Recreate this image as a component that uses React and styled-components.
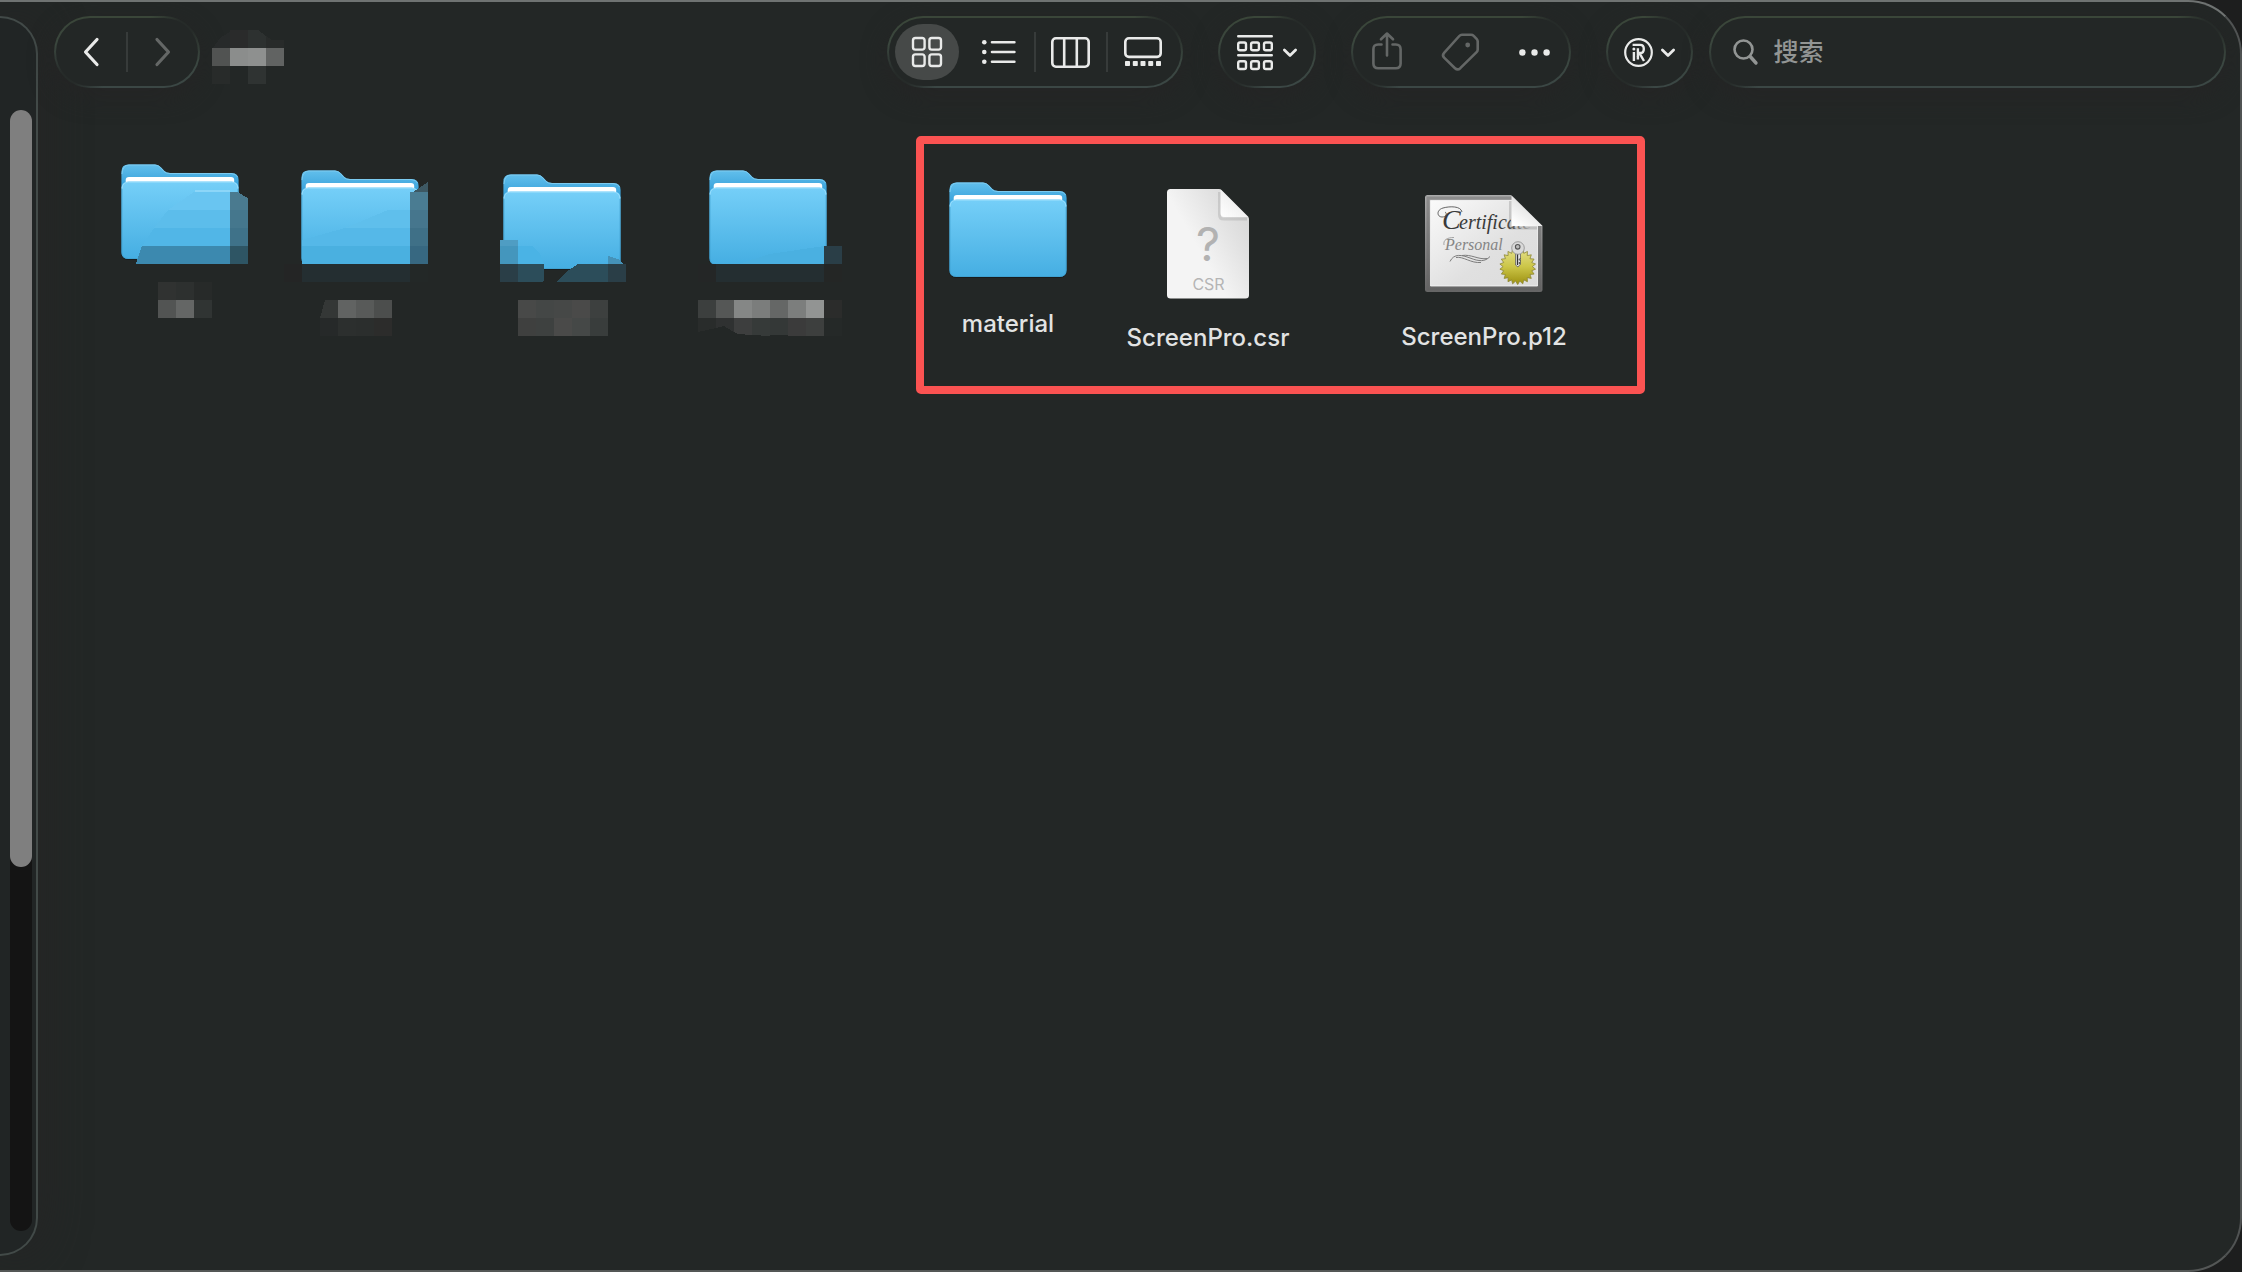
import React, {useState} from 'react';
import styled, {createGlobalStyle} from "styled-components";

const GlobalStyle = createGlobalStyle`
  * {
    box-sizing: border-box;
  }
  body {
    margin: 0;
    background-color: #1d1e1e;
    font-family: "Inter", "Noto Sans CJK SC", sans-serif;
  }
  button {
    border: none;
    padding: 0;
    margin: 0;
    background: none;
    color: inherit;
    font: inherit;
    cursor: pointer;
  }
`

const Window = styled.div`
  display: flex;
  min-height: 100vh;
  background-color: #232726;
  border-style: solid;
  border-width: 2px 2px 2px 0;
  border-color: #6f7372 #505353 #545756 transparent;
  border-radius: 0 54px 54px 0;
  overflow: hidden;
`

const Sidebar = styled.aside`
  flex: none;
  display: flex;
  width: 38px;
  margin: 14px 0;
  padding: 92px 4px 23px 10px;
  background-color: #212525;
  border: 2px solid #424a48;
  border-left: none;
  border-radius: 0 38px 38px 0;
  box-shadow: 0 0 48px #262525;
`

const ScrollTrack = styled.div`
  flex: 1;
  background-color: #141414;
  border-radius: 11px;
`

const ScrollThumb = styled.div`
  width: 100%;
  height: 67.5%;
  background-color: #7f7f7f;
  border-radius: 11px;
`

const Main = styled.main`
  flex: 1;
  min-width: 0;
  display: flex;
  flex-direction: column;
`

const Toolbar = styled.header`
  display: flex;
  align-items: center;
  padding: 14px 14px 0 16px;
  gap: 35px;
`

const Leading = styled.div`
  flex: 797 1 0;
  display: flex;
  align-items: center;
  gap: 12px;
`

const Trailing = styled.div`
  flex: 620 1 0;
  display: flex;
  align-items: center;
  gap: 16px;
`

// glass edge: lit on two corners, fading out on the other two
const Pill = styled.div`
  flex: none;
  display: flex;
  align-items: center;
  justify-content: center;
  width: ${props => props.$width}px;
  height: 72px;
  gap: ${props => props.$gap || 0}px;
  border: 2px solid transparent;
  border-radius: 36px;
  color: #e9eae9;
  background:
    linear-gradient(#232726, #232726) padding-box,
    radial-gradient(circle at calc(100% - 14px) 10px, #262b29 8px, transparent 36px) border-box,
    radial-gradient(circle at 14px calc(100% - 10px), #262b29 8px, transparent 36px) border-box,
    linear-gradient(#3a4639, #3b4745) border-box;
  box-shadow: 0 8px 24px #252525;
`

const PillButton = styled(Pill).attrs({as: "button", type: "button"})``

const SearchBox = styled(Pill).attrs({as: "label"})`
  flex: 1;
  width: auto;
  justify-content: flex-start;
  padding: 0 22px;
  color: #929594;
`

const SearchInput = styled.input`
  flex: 1;
  min-width: 0;
  border: none;
  outline: none;
  padding: 0;
  background: none;
  color: #e9eae9;
  font-family: "Inter", "Noto Sans CJK SC", sans-serif;
  font-size: 25px;
  font-weight: 500;
  line-height: 30px;
  &::placeholder {
    color: #929594;
    opacity: 1;
  }
`

const ToolButton = styled.button`
  display: flex;
  align-items: center;
  justify-content: center;
  width: ${props => props.$width || 64}px;
  height: 56px;
  border-radius: 28px;
  &[aria-pressed="true"] {
    background-color: #464948;
  }
  &:disabled {
    color: #646766;
    cursor: default;
  }
`

const Divider = styled.span`
  width: 2px;
  height: 40px;
  margin: 0 ${props => props.$space || 0}px;
  background-color: ${props => props.$hidden ? "transparent" : "#373b3a"};
`

const Icon = styled.svg`
  display: block;
  flex: none;
  overflow: visible;
  fill: none;
  stroke: currentColor;
  stroke-width: ${props => props.$stroke || 2.6};
  stroke-linecap: round;
  stroke-linejoin: round;
`

const Canvas = styled.section`
  flex: 1;
  position: relative;
`

const File = styled.button`
  position: absolute;
  left: ${props => props.$x}px;
  top: ${props => props.$y}px;
  display: flex;
  flex-direction: column;
  align-items: center;
  width: 180px;
`

const FileArt = styled.span`
  display: flex;
  align-items: center;
  justify-content: center;
  height: 128px;
`

const FileName = styled.span`
  margin-top: 15px;
  min-height: 30px;
  color: #e2e3e3;
  font-size: 24px;
  font-weight: 450;
  line-height: 30px;
`

const Art = styled.svg`
  display: block;
  overflow: visible;
`

const MosaicCover = styled.svg`
  position: absolute;
  left: 0;
  top: 0;
  overflow: visible;
`

const Marker = styled.div`
  position: absolute;
  left: 878px;
  top: 48px;
  width: 729px;
  height: 258px;
  border: 8px solid #fb5352;
  border-radius: 5px;
  pointer-events: none;
`

// a run of 18px mosaic cells
const cells = (x, y, colors) => colors.map((fill, i) => [
    `${x + i * 18},${y} ${x + i * 18 + 18},${y} ${x + i * 18 + 18},${y + 18} ${x + i * 18},${y + 18}`,
    fill
])

const Tiles = ({tiles}) => (
    <g shapeRendering="crispEdges">
        {tiles.map(([points, fill]) => <polygon key={points} points={points} fill={fill}/>)}
    </g>
)

const titleTiles = [
    ["1,18 8,8 18,2 18,18", "#272a2a"],
    ["18,0 36,0 36,18 18,18", "#2a2b2b"],
    ["36,0 46,0 54,6 54,18 36,18", "#2d3130"],
    ["54,6 60,10 72,10 72,18 54,18", "#282b2a"],
    ...cells(0, 18, ["#515352", "#8b8d8c", "#8e908f", "#616362"]),
    ...cells(0, 36, ["#282b2a", "#232726", "#2f3332"]),
]

const folders = [
    {
        x: 52, y: 60,
        tiles: [
            ["105,42 140,42 140,44 105,44", "#8cd6f8"],
            ["104,44 140,44 140,62 78,62", "#69c5f1"],
            ["78,62 140,62 140,80 64,80", "#5cbdeb"],
            ["64,80 140,80 140,98 52,98", "#51b6e7"],
            ["52,98 140,98 140,116 46,116", "#3c89af"],
            ["140,44 147,44 158,50 158,62 140,62", "#4a7a8f"],
            ...cells(140, 62, ["#45778d"]),
            ...cells(140, 80, ["#3f7289"]),
            ...cells(140, 98, ["#2e5564"]),
            ...cells(68, 134, ["#303231", "#2d302f", "#272a29"]),
            ...cells(68, 152, ["#525453", "#646665", "#303433"]),
        ]
    },
    {
        x: 232, y: 66,
        tiles: [
            ["118,56 140,56 140,74 75,74", "#5fbfec"],
            ["75,74 140,74 140,92 32,92 32,86", "#55b8e8"],
            ["32,92 140,92 140,110 32,110", "#4ab0e0"],
            ["32,110 140,110 140,128 32,128", "#242e31"],
            ["143,38 149,34 158,28 158,38", "#3d5863"],
            ...cells(140, 38, ["#4a7c92"]),
            ...cells(140, 56, ["#46768d"]),
            ...cells(140, 74, ["#3f7087"]),
            ...cells(140, 92, ["#376881"]),
            ...cells(140, 110, ["#232827"]),
            ...cells(14, 110, ["#242525"]),
            ["55,146 68,146 68,164 50,164", "#343736"],
            ...cells(68, 146, ["#616362", "#585a59", "#4c4e4d"]),
            ...cells(50, 164, ["#262929", "#2c2f2e", "#2b2e2d", "#2c2c2b"]),
        ]
    },
    {
        x: 434, y: 70,
        tiles: [
            ["28,82 46,82 46,88 28,88", "#4f9dc3"],
            ...cells(28, 88, ["#4496bd"]),
            ["46,88 60,88 68,96 72,106 46,106", "#4ab3e5"],
            ...cells(28, 106, ["#2a3e47"]),
            ["46,106 72,106 72,122 70,124 46,124", "#2c4d5a"],
            ["84,124 94,114 106,106 136,106 136,124", "#2c4d5a"],
            ["136,98 146,101 152,106 136,106", "#4592b8"],
            ...cells(136, 106, ["#2a3e47"]),
            ...cells(46, 142, ["#484948", "#444746", "#464847", "#4a4a49", "#3d403f"]),
            ...cells(46, 160, ["#3f403f", "#3e4140", "#4a4a49", "#454847", "#393d3c"]),
        ]
    },
    {
        x: 640, y: 66,
        tiles: [
            ["60,110 92,100 146,92 146,110", "#4ab0e1"],
            ["38,110 146,110 146,128 38,128", "#242e31"],
            ...cells(20, 110, ["#242626"]),
            ...cells(146, 92, ["#2a3e47"]),
            ...cells(146, 110, ["#242625"]),
            ...cells(20, 146, ["#3c3f3e", "#555756", "#858786", "#7b7d7c", "#656766", "#7c7e7d", "#929493", "#2b2c2b"]),
            ["20,164 38,164 38,174 20,178", "#292c2b"],
            ["38,164 56,164 56,178 46,172 38,174", "#2f3131"],
            ["56,164 74,164 74,181 60,180 56,178", "#3d3e3e"],
            ["74,164 92,164 92,182 74,181", "#363a39"],
            ["92,164 110,164 110,181 92,181", "#343837"],
            ...cells(110, 164, ["#3b3b3b", "#3d3f3e", "#252928"]),
        ]
    },
]

const views = [
    {
        id: "icons", label: "图标",
        icon: (
            <Icon width="30" height="30" viewBox="0 0 30 30" $stroke={2.4}>
                <rect x="1" y="1" width="11.6" height="11.6" rx="2.4"/>
                <rect x="17.4" y="1" width="11.6" height="11.6" rx="2.4"/>
                <rect x="1" y="17.4" width="11.6" height="11.6" rx="2.4"/>
                <rect x="17.4" y="17.4" width="11.6" height="11.6" rx="2.4"/>
            </Icon>
        )
    },
    {
        id: "list", label: "列表",
        icon: (
            <Icon width="34" height="24" viewBox="0 0 34 24">
                <path d="M10 2.2H32.4M10 12H32.4M10 21.8H32.4"/>
                <g fill="currentColor" stroke="none">
                    <circle cx="2.3" cy="2.2" r="2.3"/>
                    <circle cx="2.3" cy="12" r="2.3"/>
                    <circle cx="2.3" cy="21.8" r="2.3"/>
                </g>
            </Icon>
        )
    },
    {
        id: "columns", label: "分栏",
        icon: (
            <Icon width="39" height="31" viewBox="0 0 39 31">
                <rect x="1.3" y="1.3" width="36.4" height="28.4" rx="3.6"/>
                <path d="M13.2 1.3V29.7M25.8 1.3V29.7"/>
            </Icon>
        )
    },
    {
        id: "gallery", label: "画廊",
        icon: (
            <Icon width="38" height="30" viewBox="0 0 38 30">
                <rect x="1.3" y="1.3" width="35.4" height="18.6" rx="3.6"/>
                <g fill="currentColor" stroke="none">
                    <rect x="1" y="24" width="5" height="5" rx=".8"/>
                    <rect x="8.8" y="24" width="5" height="5" rx=".8"/>
                    <rect x="16.5" y="24" width="5" height="5" rx=".8"/>
                    <rect x="24.2" y="24" width="5" height="5" rx=".8"/>
                    <rect x="32" y="24" width="5" height="5" rx=".8"/>
                </g>
            </Icon>
        )
    },
]

const ChevronDown = () => (
    <Icon width="14" height="9" viewBox="0 0 14 9" $stroke={2.8}>
        <path d="M1.4 2L7 7.4L12.6 2"/>
    </Icon>
)

const FolderArt = () => (
    <Art width="118" height="96" viewBox="0 0 118 96">
        <defs>
            <linearGradient id="folderBack" x1="0" y1="0" x2="0" y2="1">
                <stop offset="0" stopColor="#62bfec"/>
                <stop offset=".8" stopColor="#3ba4dc"/>
            </linearGradient>
            <linearGradient id="folderFront" x1="0" y1="0" x2="0" y2="1">
                <stop offset="0" stopColor="#75cff8"/>
                <stop offset="1" stopColor="#45aee2"/>
            </linearGradient>
        </defs>
        <rect x="0" y="70" width="118" height="26" rx="7" fill="#171c1e"/>
        <path d="M.4 24V7.5Q.4.4 7.5.4H34Q37.5.4 40 3.2L43.5 7Q45.5 9 49 9H110.5Q117.6 9 117.6 16V24Z" fill="url(#folderBack)"/>
        <path d="M1 10Q1.5 1 8 1H34Q37 1 39.5 3.5L43 7.5Q45 9.5 49 9.5H110Q115 9.5 116.5 13" fill="none" stroke="#7ccbf0" strokeWidth="1"/>
        <path d="M4.7 22V16Q4.7 13 8 13H110Q113.2 13 113.2 16V22Z" fill="#fff"/>
        <path d="M.4 24.5Q.4 17.6 7.5 17.6H110.5Q117.6 17.6 117.6 24.5V88Q117.6 95 110.5 95H7.5Q.4 95 .4 88Z" fill="url(#folderFront)"/>
        <path d="M1 24.5Q1.5 18.2 7.5 18.2H110.5Q116.5 18.2 117 24.5" fill="none" stroke="#96dcfb" strokeWidth="1"/>
        <path d="M.9 25V88Q1 94.5 7.5 94.5H110.5Q117 94.5 117.1 88V25" fill="none" stroke="#3d9ccc" strokeWidth="1" opacity=".7"/>
    </Art>
)

const CsrArt = () => (
    <Art width="82" height="110" viewBox="0 0 82 110">
        <defs>
            <linearGradient id="page" x1="1" y1="0" x2=".35" y2=".5">
                <stop offset="0" stopColor="#d2d2d2"/>
                <stop offset=".5" stopColor="#e2e2e2"/>
                <stop offset="1" stopColor="#f4f4f4"/>
            </linearGradient>
            <linearGradient id="pageFold" x1="1" y1="0" x2="0" y2="1">
                <stop offset=".45" stopColor="#f0f0f0"/>
                <stop offset="1" stopColor="#fff"/>
            </linearGradient>
        </defs>
        <path d="M3.5 0H52Q53.5 0 54.5 1L81 27.5Q82 28.5 82 30V106Q82 109.5 78.5 109.5H3.5Q0 109.5 0 106V3.5Q0 0 3.5 0Z" fill="url(#page)"/>
        <path d="M52.5 3V26Q52.5 30 56.5 30H80" fill="none" stroke="#000" strokeOpacity=".1" strokeWidth="3"/>
        <path d="M53.5 .5L81 28H57.5Q53.5 28 53.5 24Z" fill="url(#pageFold)"/>
        <text x="41" y="72" textAnchor="middle" fontFamily="Inter, sans-serif" fontSize="47" fontWeight="400" fill="#b2b2b2">?</text>
        <text x="41.5" y="100.5" textAnchor="middle" fontFamily="Inter, sans-serif" fontSize="16" fill="#b5b5b5">CSR</text>
    </Art>
)

const sealPoints = Array.from({length: 44}, (_, i) => {
    const r = i % 2 ? 14.6 : 18
    const a = i * Math.PI / 22
    return `${(92.7 + r * Math.sin(a)).toFixed(2)},${(71.6 - r * Math.cos(a)).toFixed(2)}`
}).join(" ")

const CertificateArt = () => (
    <Art width="118" height="97" viewBox="0 0 118 97">
        <defs>
            <linearGradient id="frame" x1="0" y1="0" x2="0" y2="1">
                <stop offset="0" stopColor="#a9a9a9"/>
                <stop offset="1" stopColor="#666"/>
            </linearGradient>
            <linearGradient id="sheet" x1="0" y1="0" x2="1" y2="1">
                <stop offset="0" stopColor="#fafafa"/>
                <stop offset=".6" stopColor="#e0e0e0"/>
                <stop offset="1" stopColor="#dcdcdc"/>
            </linearGradient>
            <linearGradient id="curl" x1=".2" y1="1" x2=".7" y2=".3">
                <stop offset="0" stopColor="#fff"/>
                <stop offset="1" stopColor="#dedede"/>
            </linearGradient>
            <linearGradient id="seal" x1="0" y1="0" x2="0" y2="1">
                <stop offset="0" stopColor="#e4e08a"/>
                <stop offset=".5" stopColor="#ccc648"/>
                <stop offset="1" stopColor="#9c9010"/>
            </linearGradient>
            <linearGradient id="ink" gradientUnits="userSpaceOnUse" x1="80" y1="0" x2="102" y2="0">
                <stop offset="0" stopColor="#3a3a3a"/>
                <stop offset="1" stopColor="#b8b8b8"/>
            </linearGradient>
            <clipPath id="sheetClip">
                <path d="M5.5 5.5H86V31H112.5V91H5.5Z"/>
            </clipPath>
        </defs>
        <path d="M2.5 0H86L117.5 31V94.5Q117.5 97 115 97H2.5Q0 97 0 94.5V2.5Q0 0 2.5 0Z" fill="url(#frame)"/>
        <path d="M3 3H88L114.5 30V94H3Z" fill="none" stroke="#5c5c5c" strokeOpacity=".35" strokeWidth="3"/>
        <path d="M5.5 5.5H90L112.5 28V91H5.5Z" fill="url(#sheet)" stroke="#f6f6f6" strokeWidth=".8"/>
        <g clipPath="url(#sheetClip)" fontFamily="Liberation Serif, serif" fontStyle="italic">
            <text x="17" y="34" fontSize="28" fill="#3a3a3a">C</text>
            <text x="34" y="34" fontSize="20" fill="url(#ink)">ertificate</text>
            <text x="20" y="55" fontSize="16" fill="#858585">Personal</text>
        </g>
        <path d="M37 17C36 11 25 11 18 13C11 15 12 22 17 22C22 22 22 18 20 17" fill="none" stroke="#555" strokeWidth=".9"/>
        <path d="M19 50C18 45 22 42.5 29 42.5" fill="none" stroke="#909090" strokeWidth=".8"/>
        <path d="M25 66.5C29 58 37 60 45 63C54 66.5 60 67 65 61.5M31 62.5C38 61 46 68.5 56 67.5M37 60.5C46 59 54 65 62 63.5" fill="none" stroke="#7d7d7d" strokeWidth="1"/>
        <path d="M85.5 6V33H112" fill="none" stroke="#000" strokeOpacity=".14" strokeWidth="3"/>
        <path d="M86.5 .5L117.5 31H86.5Z" fill="url(#curl)"/>
        <polygon points={sealPoints} fill="url(#seal)" stroke="#8d8634" strokeWidth=".8"/>
        <path d="M90.5 58H95.5V69L93 72L90.5 70Z" fill="#e4e4e4" stroke="#555" strokeWidth=".7"/>
        <path d="M92.5 58V70" stroke="#333" strokeWidth="1.3"/>
        <path d="M95.5 63.5L93.8 64.5L95.5 65.5M95.5 67L93.8 68L95.5 69" fill="none" stroke="#444" strokeWidth=".9"/>
        <circle cx="93" cy="53" r="6.3" fill="#d9d9d9" stroke="#8a8a8a" strokeWidth=".8"/>
        <circle cx="92.7" cy="51.8" r="2.3" fill="#bbb" stroke="#555" strokeWidth="1.1"/>
    </Art>
)

const files = [
    {name: "material", x: 880, y: 78, art: <FolderArt/>},
    {name: "ScreenPro.csr", x: 1080, y: 92, art: <CsrArt/>},
    {name: "ScreenPro.p12", x: 1356, y: 91, art: <CertificateArt/>},
]

const App = () => {
    const [view, setView] = useState("icons")
    const [query, setQuery] = useState("")

    return (
        <>
            <GlobalStyle/>
            <Window>
                <Sidebar>
                    <ScrollTrack>
                        <ScrollThumb/>
                    </ScrollTrack>
                </Sidebar>
                <Main>
                    <Toolbar>
                        <Leading>
                            <Pill $width={146}>
                                <ToolButton type="button" $width={70} aria-label="后退">
                                    <Icon width="14" height="28" viewBox="0 0 14 28" $stroke={3.2}>
                                        <path d="M13 1.5L1.5 14L13 26.5"/>
                                    </Icon>
                                </ToolButton>
                                <Divider/>
                                <ToolButton type="button" $width={70} aria-label="前进" disabled>
                                    <Icon width="14" height="28" viewBox="0 0 14 28" $stroke={3.2}>
                                        <path d="M1 1.5L12.5 14L1 26.5"/>
                                    </Icon>
                                </ToolButton>
                            </Pill>
                            <Art width="72" height="44" viewBox="0 0 72 44">
                                <Tiles tiles={titleTiles}/>
                            </Art>
                        </Leading>
                        <Pill $width={296}>
                            {views.map((item, i) => (
                                <React.Fragment key={item.id}>
                                    {i > 0 && <Divider $space={3} $hidden={i === 1}/>}
                                    <ToolButton
                                        type="button"
                                        aria-label={item.label}
                                        aria-pressed={view === item.id}
                                        onClick={() => setView(item.id)}
                                    >
                                        {item.icon}
                                    </ToolButton>
                                </React.Fragment>
                            ))}
                        </Pill>
                        <PillButton $width={98} $gap={10} aria-label="分组">
                            <Icon width="36" height="35" viewBox="0 0 36 35" $stroke={2.4}>
                                <path d="M1.2 1.2H34.8M1.2 20.2H34.8"/>
                                <rect x="1.2" y="7.5" width="7.8" height="7.8" rx="1.8"/>
                                <rect x="14.1" y="7.5" width="7.8" height="7.8" rx="1.8"/>
                                <rect x="27" y="7.5" width="7.8" height="7.8" rx="1.8"/>
                                <rect x="1.2" y="26.2" width="7.8" height="7.8" rx="1.8"/>
                                <rect x="14.1" y="26.2" width="7.8" height="7.8" rx="1.8"/>
                                <rect x="27" y="26.2" width="7.8" height="7.8" rx="1.8"/>
                            </Icon>
                            <ChevronDown/>
                        </PillButton>
                        <Pill $width={220} $gap={14}>
                            <ToolButton type="button" $width={60} aria-label="共享" disabled>
                                <Icon width="30" height="40" viewBox="0 0 30 40">
                                    <path d="M9.5 12.5H6.2Q1.4 12.5 1.4 17.2V31.5Q1.4 36.2 6.2 36.2H23.8Q28.6 36.2 28.6 31.5V17.2Q28.6 12.5 23.8 12.5H20.5"/>
                                    <path d="M15 23.5V2M9 7.3L15 1.5L21 7.3"/>
                                </Icon>
                            </ToolButton>
                            <ToolButton type="button" $width={60} aria-label="标签" disabled>
                                <Icon width="37" height="38" viewBox="0 0 37 38">
                                    <path d="M20 1.8H29Q30.6 1.8 31.7 2.9L34.6 5.9Q35.7 7 35.7 8.6V16.4Q35.7 18 34.6 19.1L18.3 35.2Q15.6 37.7 13 35.2L2.1 24.6Q-.1 22.2 2.1 19.8L17.3 3Q18.4 1.8 20 1.8Z"/>
                                    <circle cx="25.7" cy="12" r="2.4" fill="currentColor" stroke="none"/>
                                </Icon>
                            </ToolButton>
                            <ToolButton type="button" $width={60} aria-label="更多">
                                <Icon width="31" height="7" viewBox="0 0 31 7">
                                    <g fill="currentColor" stroke="none">
                                        <circle cx="3.4" cy="3.5" r="3.2"/>
                                        <circle cx="15.5" cy="3.5" r="3.2"/>
                                        <circle cx="27.6" cy="3.5" r="3.2"/>
                                    </g>
                                </Icon>
                            </ToolButton>
                        </Pill>
                        <Trailing>
                            <PillButton $width={87} $gap={8} aria-label="扩展">
                                <Icon width="29" height="29" viewBox="0 0 29 29" $stroke={2.2}>
                                    <circle cx="14.5" cy="14.5" r="13.3"/>
                                    <g strokeLinecap="butt" strokeWidth="2.4">
                                        <path d="M8.6 6.9H16.2Q19.8 6.9 19.8 10.9Q19.8 15 16.2 15H13.9V10.2M13.9 14V18.6M15.6 15.4L20 23"/>
                                        <path d="M9.9 14V23M13.9 18V21.5"/>
                                    </g>
                                    <circle cx="9.9" cy="10.9" r="1.5" fill="currentColor" stroke="none"/>
                                </Icon>
                                <ChevronDown/>
                            </PillButton>
                            <SearchBox $gap={16}>
                                <Icon width="25" height="26" viewBox="0 0 25 26">
                                    <circle cx="10.5" cy="10.5" r="9"/>
                                    <path d="M17.2 17.5L23 24" strokeWidth="3.4"/>
                                </Icon>
                                <SearchInput
                                    type="text"
                                    aria-label="搜索"
                                    placeholder="搜索"
                                    value={query}
                                    onChange={e => setQuery(e.target.value)}
                                />
                            </SearchBox>
                        </Trailing>
                    </Toolbar>
                    <Canvas>
                        {folders.map((folder, i) => (
                            <File key={i} type="button" aria-label={`文件夹 ${i + 1}`} $x={folder.x} $y={folder.y}>
                                <FileArt><FolderArt/></FileArt>
                                <FileName/>
                                <MosaicCover width="180" height="182" viewBox="0 0 180 182">
                                    <Tiles tiles={folder.tiles}/>
                                </MosaicCover>
                            </File>
                        ))}
                        {files.map(file => (
                            <File key={file.name} type="button" $x={file.x} $y={file.y}>
                                <FileArt>{file.art}</FileArt>
                                <FileName>{file.name}</FileName>
                            </File>
                        ))}
                        <Marker/>
                    </Canvas>
                </Main>
            </Window>
        </>
    );
}

export default App;
